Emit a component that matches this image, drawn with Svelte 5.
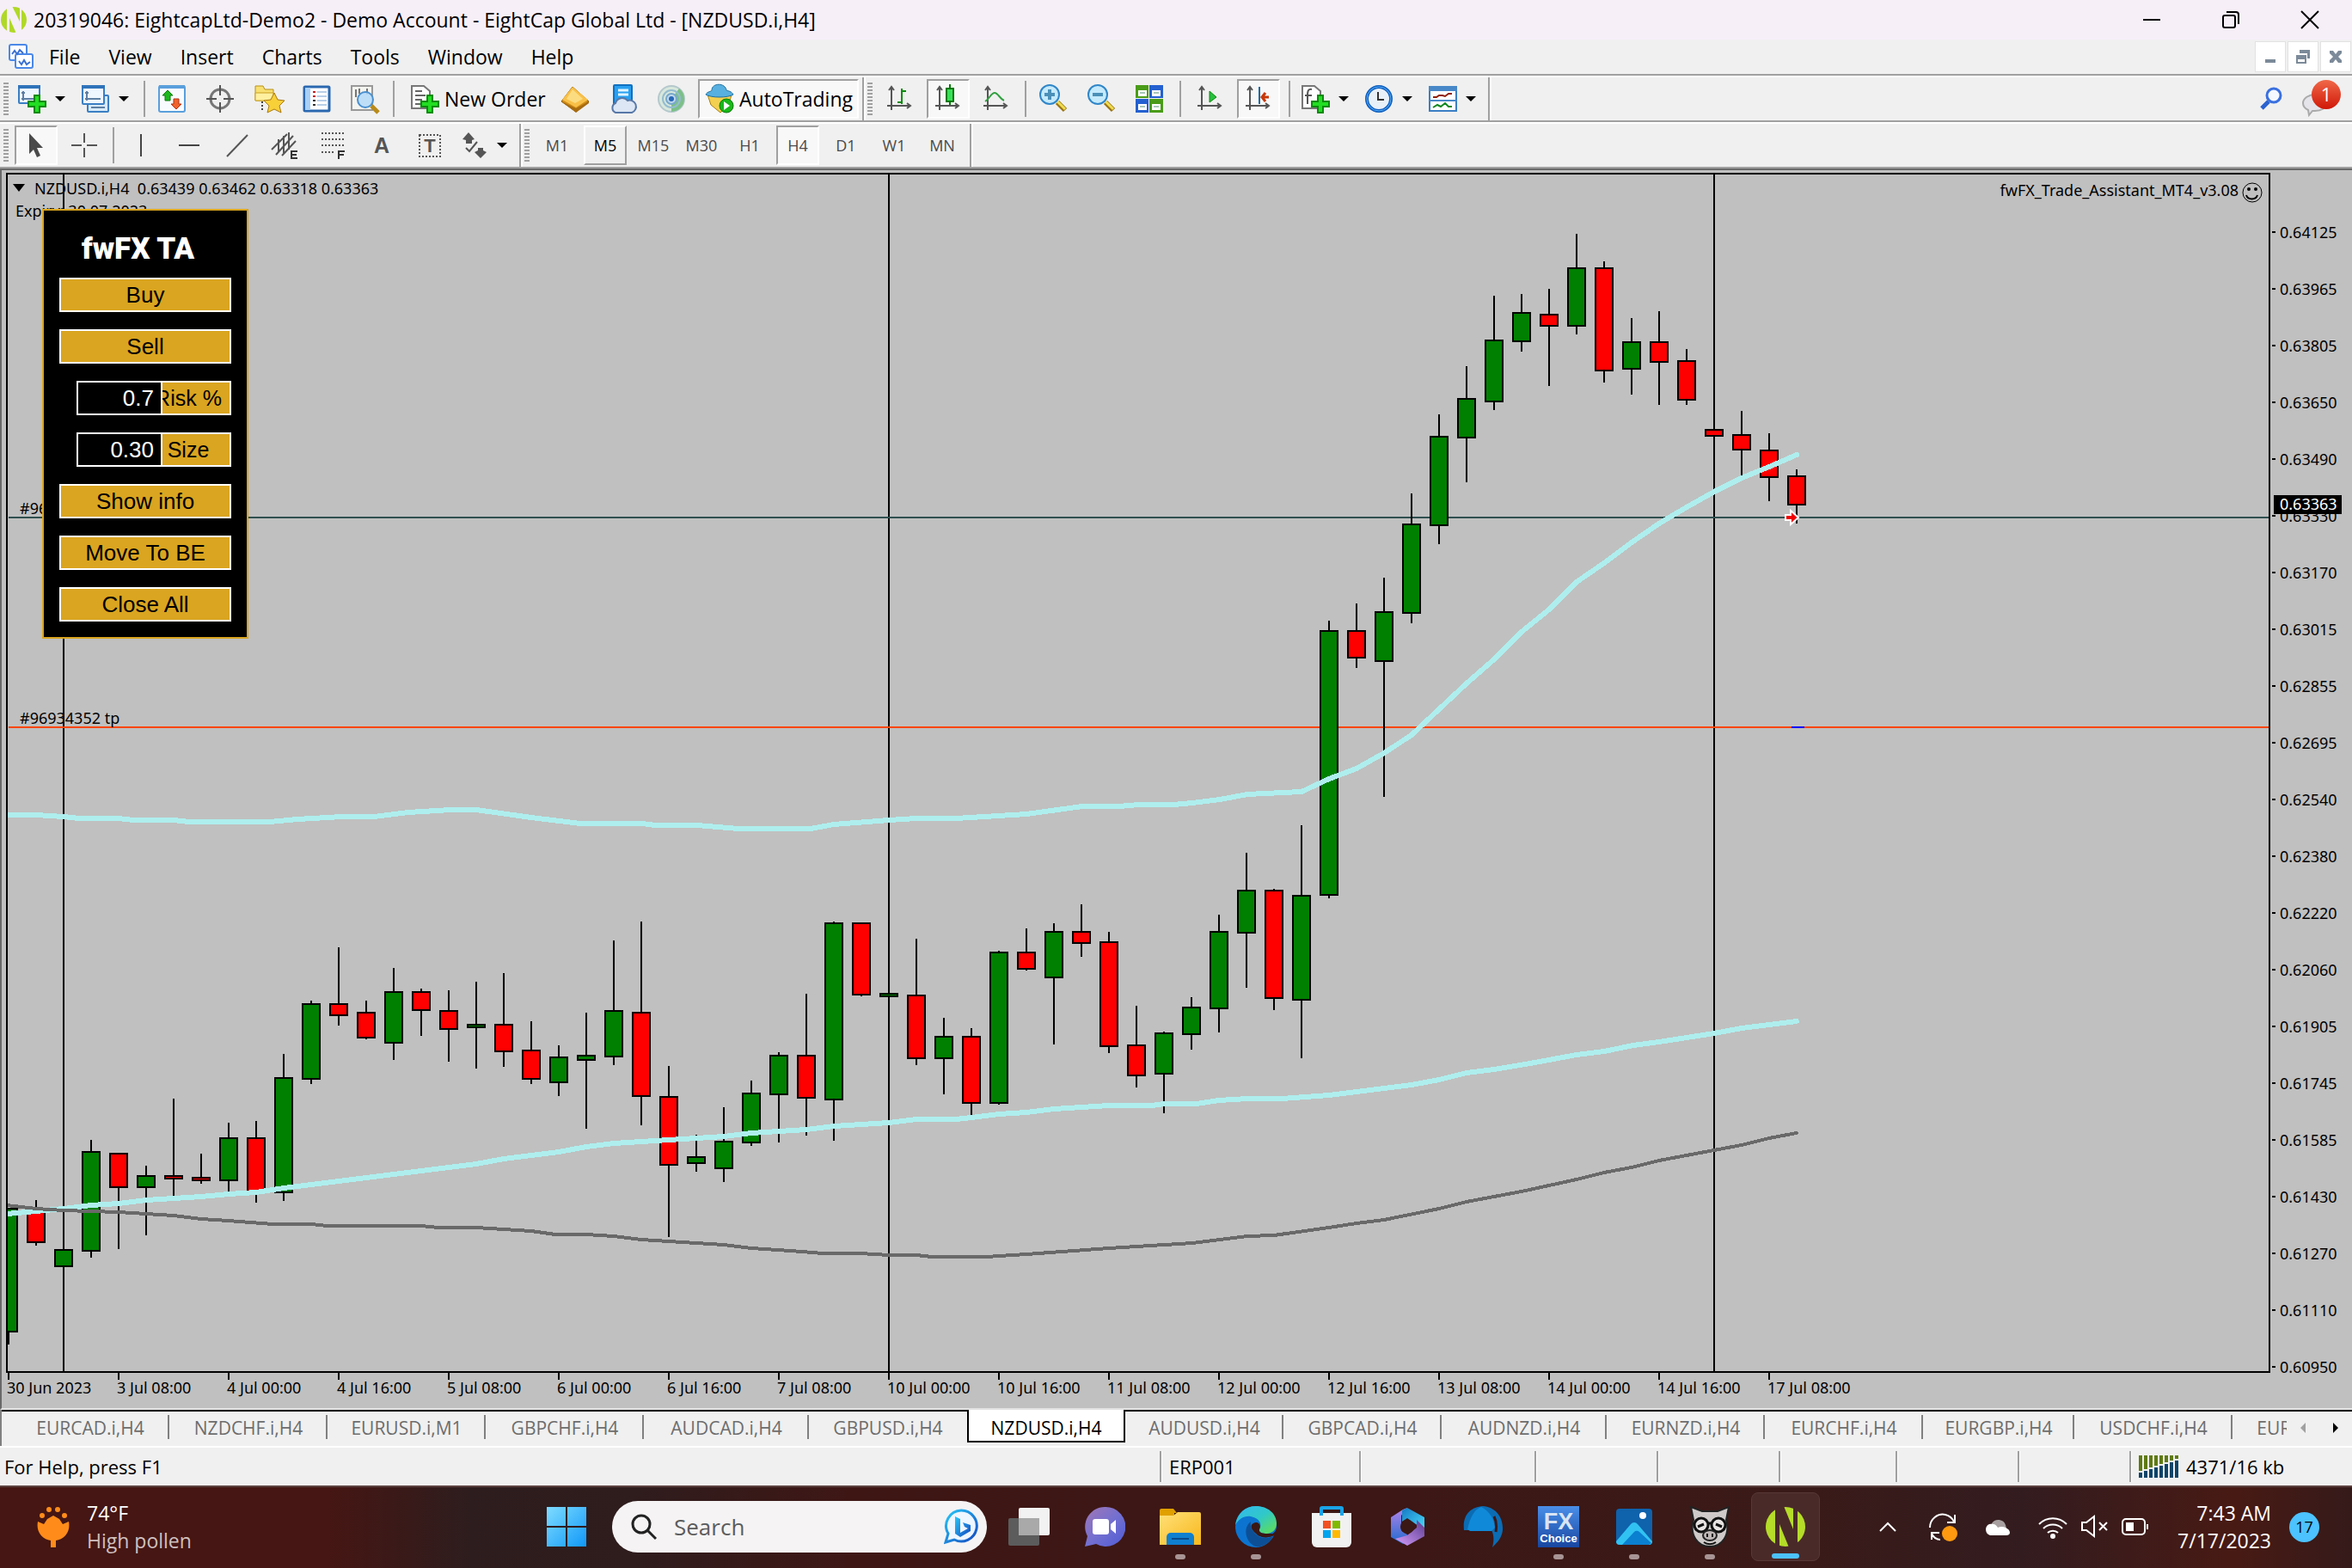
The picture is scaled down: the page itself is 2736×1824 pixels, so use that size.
<script>
  const menus = ['File', 'View', 'Insert', 'Charts', 'Tools', 'Window', 'Help'];
  const frames = ['M1', 'M5', 'M15', 'M30', 'H1', 'H4', 'D1', 'W1', 'MN'];
  const drawing = ['vline', 'hline', 'trend', 'channel', 'fib', 'letter', 'label'];
  const tabs = [
    'EURCAD.i,H4', 'NZDCHF.i,H4', 'EURUSD.i,M1', 'GBPCHF.i,H4', 'AUDCAD.i,H4', 'GBPUSD.i,H4', 'NZDUSD.i,H4',
    'AUDUSD.i,H4', 'GBPCAD.i,H4', 'AUDNZD.i,H4', 'EURNZD.i,H4', 'EURCHF.i,H4', 'EURGBP.i,H4', 'USDCHF.i,H4', 'EURAUD.i,H4'
  ];
  const wideTabs = ['AUDCAD.i,H4', 'AUDNZD.i,H4'];
  const narrowTabs = ['EURGBP.i,H4'];

  const prices = [
    '0.64125', '0.63965', '0.63805', '0.63650', '0.63490', '0.63330', '0.63170', '0.63015', '0.62855', '0.62695',
    '0.62540', '0.62380', '0.62220', '0.62060', '0.61905', '0.61745', '0.61585', '0.61430', '0.61270', '0.61110', '0.60950'
  ];
  const times = [
    '30 Jun 2023', '3 Jul 08:00', '4 Jul 00:00', '4 Jul 16:00', '5 Jul 08:00', '6 Jul 00:00', '6 Jul 16:00', '7 Jul 08:00',
    '10 Jul 00:00', '10 Jul 16:00', '11 Jul 08:00', '12 Jul 00:00', '12 Jul 16:00', '13 Jul 08:00', '14 Jul 00:00',
    '14 Jul 16:00', '17 Jul 08:00'
  ];
  const STEP = 32;

  // direction, high, body top, body bottom, low
  const candles = [
    ['up', 1405, 1405, 1550, 1564], ['down', 1396, 1409, 1446, 1449], ['up', 1453, 1453, 1474, 1474],
    ['up', 1326, 1339, 1456, 1463], ['down', 1341, 1341, 1382, 1453], ['up', 1356, 1367, 1382, 1437],
    ['down', 1278, 1367, 1372, 1394], ['down', 1342, 1369, 1374, 1377], ['up', 1306, 1323, 1374, 1387],
    ['down', 1304, 1323, 1387, 1399], ['up', 1226, 1253, 1388, 1397], ['up', 1164, 1167, 1256, 1261],
    ['down', 1102, 1167, 1182, 1193], ['down', 1164, 1177, 1208, 1209], ['up', 1126, 1153, 1214, 1233],
    ['down', 1150, 1153, 1176, 1205], ['down', 1152, 1175, 1198, 1235], ['up', 1142, 1191, 1196, 1243],
    ['down', 1132, 1191, 1224, 1241], ['down', 1188, 1221, 1256, 1261], ['up', 1216, 1229, 1260, 1275],
    ['up', 1178, 1227, 1234, 1313], ['up', 1094, 1175, 1230, 1239], ['down', 1072, 1177, 1276, 1309],
    ['down', 1240, 1275, 1356, 1439], ['up', 1320, 1345, 1354, 1363], ['up', 1288, 1327, 1360, 1375],
    ['up', 1257, 1271, 1330, 1333], ['up', 1224, 1227, 1274, 1329], ['down', 1156, 1227, 1278, 1321],
    ['up', 1072, 1073, 1280, 1327], ['down', 1073, 1073, 1158, 1159], ['up', 1155, 1155, 1160, 1160],
    ['down', 1092, 1157, 1232, 1239], ['up', 1184, 1205, 1232, 1273], ['down', 1196, 1205, 1284, 1297],
    ['up', 1106, 1107, 1284, 1285], ['down', 1080, 1107, 1128, 1129], ['up', 1074, 1083, 1138, 1215],
    ['down', 1052, 1083, 1098, 1113], ['down', 1084, 1095, 1218, 1225], ['down', 1170, 1215, 1252, 1265],
    ['up', 1200, 1201, 1250, 1295], ['up', 1160, 1171, 1204, 1221], ['up', 1064, 1083, 1174, 1201],
    ['up', 992, 1035, 1086, 1149], ['down', 1034, 1035, 1162, 1175], ['up', 960, 1041, 1164, 1231],
    ['up', 722, 733, 1042, 1045], ['down', 702, 733, 766, 777], ['up', 672, 711, 770, 927],
    ['up', 574, 609, 714, 725], ['up', 482, 507, 612, 633], ['up', 426, 463, 510, 561],
    ['up', 344, 395, 468, 477], ['up', 342, 363, 398, 409], ['down', 336, 365, 380, 449],
    ['up', 272, 311, 380, 389], ['down', 304, 311, 432, 445], ['up', 370, 397, 430, 459],
    ['down', 362, 397, 422, 471], ['down', 406, 419, 466, 471], ['down', 499, 499, 508, 508],
    ['down', 478, 505, 524, 555], ['down', 504, 523, 556, 583], ['down', 546, 553, 588, 609]
  ];

  const fastAverage =
    '8,948 42,948 74,950 92,952 137,952 156,954 202,954 220,956 314,956 346,953 398,950 435,950 475,945 524,942 554,942 ' +
    '618,951 675,958 747,958 762,960 811,960 859,964 943,964 970,959 1034,954 1066,952 1112,952 1194,947 1259,938 1302,938 ' +
    '1325,936 1365,936 1387,934 1419,930 1451,924 1514,921 1546,906 1578,894 1610,876 1642,855 1674,825 1706,795 1738,767 ' +
    '1770,735 1802,709 1834,677 1866,655 1898,631 1930,609 1962,590 1994,572 2026,556 2058,543 2090,529';
  const midAverage =
    '8,1412 42,1409 74,1406 106,1402 138,1400 170,1396 234,1392 266,1389 298,1387 330,1382 394,1374 458,1366 522,1358 ' +
    '554,1354 586,1348 650,1340 682,1334 714,1330 778,1326 842,1322 874,1318 906,1316 938,1314 970,1310 1034,1306 ' +
    '1066,1302 1112,1302 1130,1300 1162,1296 1194,1294 1226,1290 1290,1286 1340,1286 1354,1284 1392,1284 1418,1280 ' +
    '1451,1278 1491,1278 1546,1274 1578,1270 1642,1262 1674,1256 1706,1248 1738,1244 1780,1237 1834,1227 1866,1223 ' +
    '1900,1216 1930,1212 1962,1207 1994,1202 2026,1196 2090,1188';
  const slowAverage =
    '8,1402 42,1406 74,1408 138,1410 202,1414 234,1418 266,1420 317,1424 362,1424 381,1426 490,1426 510,1428 554,1428 ' +
    '618,1432 646,1436 682,1436 714,1438 746,1442 842,1448 874,1452 920,1455 957,1458 1000,1458 1034,1460 1066,1460 ' +
    '1084,1462 1147,1462 1194,1459 1290,1452 1387,1446 1419,1442 1451,1438 1482,1437 1546,1428 1578,1423 1610,1419 ' +
    '1674,1406 1706,1398 1770,1386 1802,1379 1834,1372 1866,1364 1898,1358 1930,1350 1994,1338 2026,1332 2058,1324 2090,1318';

  const apps = [
    ['taskview', 'Task view', ''], ['chat', 'Chat', ''], ['explorer', 'File Explorer', 'open'], ['edge', 'Microsoft Edge', 'open'],
    ['store', 'Microsoft Store', ''], ['m365', 'Microsoft 365', ''], ['bird', 'Mail', ''], ['fx', 'FX Choice', 'open'],
    ['photos', 'Photos', 'open'], ['pig', 'Pig', 'open'], ['eight', 'MetaTrader 4', 'current']
  ];

  let risk = $state('0.7');
  let size = $state('0.30');
</script>

{#snippet plus()}
  <path d="M19 13h6v7h7v6h-7v7h-6v-7h-7v-6h7z" fill="#22dd22" stroke="#0a8a0a" stroke-width="2" />
{/snippet}

{#snippet axes()}
  <path d="M6 30V4M1 25h26M3 7l3-4 3 4M24 22l4 3-4 3" fill="none" stroke="#555" stroke-width="2" />
{/snippet}

{#snippet lens()}
  <path d="M21 21l9 9" stroke="#9a7410" stroke-width="6" />
  <path d="M21 20l9 9" stroke="#f0dc50" stroke-width="3" />
  <circle cx="12" cy="12" r="11" fill="#c4eafc" stroke="#2f86c8" stroke-width="2" />
{/snippet}

{#snippet icon(name)}
  <svg class="ico" viewBox="0 0 32 34" aria-hidden="true">
    {#if name === 'newchart'}
      <rect x="1" y="2" width="24" height="20" rx="1" fill="#eef6ff" stroke="#3a7fc4" stroke-width="2" />
      <rect x="0" y="1" width="26" height="4" fill="#2f74ba" />
      <path d="M6 8v11M4 17h17M4 10h4" stroke="#5d7fa3" stroke-width="2" fill="none" />
      {@render plus()}
    {:else if name === 'profiles'}
      <rect x="7" y="13" width="24" height="19" rx="1" fill="#d8eafa" stroke="#3a7fc4" stroke-width="2" />
      <rect x="1" y="2" width="25" height="21" rx="1" fill="#eef6ff" stroke="#3a7fc4" stroke-width="2" />
      <rect x="0" y="1" width="27" height="4" fill="#2f74ba" />
      <path d="M6 8v11M4 17h18M4 10h4M11 27h16" stroke="#5d7fa3" stroke-width="2" fill="none" />
    {:else if name === 'market'}
      <rect x="1" y="2" width="30" height="30" rx="2" fill="#f8fbff" stroke="#5a9fdc" stroke-width="2" />
      <rect x="1" y="1" width="30" height="4" fill="#5a9fdc" />
      <path d="M11 7l6 6h-3v6H8v-6H5z" fill="#1db81d" stroke="#0a7a0a" />
      <path d="M21 29l6-6h-3v-6h-6v6h-3z" fill="#f0642c" stroke="#b03010" />
    {:else if name === 'target'}
      <circle cx="16" cy="17" r="11" fill="none" stroke="#777" stroke-width="3" />
      <path d="M16 1v12M16 21v12M0 17h12M20 17h12" stroke="#555" stroke-width="2" />
    {:else if name === 'navigator'}
      <path d="M1 2h9l2 4h10v13H1z" fill="#f8e070" stroke="#b89018" />
      <path d="M1 10h21v9H1z" fill="#fff0a0" stroke="#c8a020" />
      <path d="M9 20v12" stroke="#444" stroke-width="2" stroke-dasharray="2 2" />
      <path d="M23 10l4 8 8 1-6 6 2 8-8-4-8 4 2-8-6-6 8-1z" fill="#f8d038" stroke="#a87810" />
    {:else if name === 'terminal'}
      <rect x="2" y="3" width="29" height="28" rx="1" fill="#fff" stroke="#2a68b0" stroke-width="3" />
      <rect x="3" y="4" width="6" height="26" fill="#a8d0f8" />
      <path d="M12 9h3M12 14h3" stroke="#c02020" stroke-width="2" />
      <path d="M12 19h3M12 24h3" stroke="#303030" stroke-width="2" />
      <path d="M17 9h11M17 14h11M17 19h11M17 24h11" stroke="#b8cfe8" stroke-width="2" />
    {:else if name === 'tester'}
      <path d="M1 2h24v28H1z" fill="#f4f4f0" stroke="#999" stroke-width="2" />
      <path d="M6 6v9M10 5v6M19 5v7" stroke="#777" stroke-width="2" />
      <path d="M24 25l8 8" stroke="#b88a18" stroke-width="5" />
      <circle cx="17" cy="18" r="9" fill="#b8dcf8" fill-opacity="0.9" stroke="#4a90d0" stroke-width="2" />
    {:else if name === 'order'}
      <path d="M1 2h14l7 6v20H1z" fill="#fff" stroke="#777" stroke-width="2" />
      <path d="M5 8h8M5 13h12M5 18h8M5 23h6" stroke="#666" stroke-width="2" />
      {@render plus()}
    {:else if name === 'gold'}
      <path d="M13 3l19 17-15 12L0 20z" fill="#d08c18" stroke="#8a5808" />
      <path d="M13 3l18 15-14 9L1 18z" fill="#f8c048" />
      <path d="M13 6l12 11-9 5L6 17z" fill="#fcdc80" />
      <path d="M0 20l17 8 15-8v2L17 33z" fill="#a86c10" />
    {:else if name === 'cloud'}
      <rect x="5" y="1" width="21" height="23" rx="1" fill="#28a0f0" stroke="#1070c0" stroke-width="2" />
      <path d="M10 7h12M10 12h12" stroke="#e0f4ff" stroke-width="3" />
      <path d="M7 33a6 6 0 0 1 0-11 8 8 0 0 1 14-3 7 7 0 0 1 5 14z" fill="#dce6f4" stroke="#5878a8" stroke-width="2" />
    {:else if name === 'signal'}
      <circle cx="16" cy="17" r="15" fill="#d8e8dc" stroke="#b4c8cc" stroke-width="2" />
      <path d="M16 17v15a15 15 0 0 0 15-15 15 15 0 0 0-6-12z" fill="#7cc088" />
      <circle cx="16" cy="17" r="10" fill="none" stroke="#94bcd0" stroke-width="2" />
      <circle cx="16" cy="17" r="6" fill="#c0d8ec" stroke="#78a8cc" stroke-width="2" />
      <circle cx="16" cy="17" r="3" fill="#2868b8" />
    {:else if name === 'auto'}
      <path d="M2 12h28l-3 11-10 10-11-9z" fill="#f4d050" stroke="#a88010" />
      <path d="M0 12c2-4 6-3 7-5 0-9 16-9 17 0 2 1 6 1 8 5-6 4-26 4-32 0z" fill="#58b0e0" stroke="#2070a0" />
      <circle cx="24" cy="25" r="8" fill="#18b818" stroke="#0a780a" />
      <path d="M21 20v10l7-5z" fill="#fff" />
    {:else if name === 'bars'}
      {@render axes()}
      <path d="M18 5v18M18 8h5M13 21h5" stroke="#0a8a0a" stroke-width="2" fill="none" />
    {:else if name === 'candles'}
      {@render axes()}
      <path d="M18 0v24" stroke="#087808" stroke-width="2" />
      <rect x="14" y="5" width="8" height="15" fill="#38e058" stroke="#087808" stroke-width="2" />
    {:else if name === 'line'}
      {@render axes()}
      <path d="M3 20c5-3 7-10 11-10s6 7 11 9" stroke="#30a040" stroke-width="2" fill="none" />
    {:else if name === 'zoomin'}
      {@render lens()}
      <path d="M12 6v12M6 12h12" stroke="#4a90b8" stroke-width="4" />
    {:else if name === 'zoomout'}
      {@render lens()}
      <path d="M6 12h12" stroke="#4a90b8" stroke-width="4" />
    {:else if name === 'tile'}
      <path d="M0 1h15v15H0zM16 17h16v16H16z" fill="#4a9c18" />
      <path d="M16 1h16v15H16zM0 17h15v16H0z" fill="#2460d0" />
      <path d="M3 7h10v7H3zM19 7h10v7H19zM3 23h10v7H3zM19 23h10v7H19z" fill="#fff" />
      <path d="M5 10h6M21 10h6M5 26h6M21 26h6" stroke="#a8c8b8" stroke-width="2" />
    {:else if name === 'scroll'}
      {@render axes()}
      <path d="M15 8v13l8-6z" fill="#28c040" stroke="#0a8a0a" />
    {:else if name === 'shift'}
      {@render axes()}
      <path d="M17 3v20" stroke="#1868a0" stroke-width="2" />
      <path d="M28 15h-8M24 10l-4 5 4 5" stroke="#c83808" stroke-width="3" fill="none" />
    {:else if name === 'indicators'}
      <path d="M1 2h14l7 6v20H1z" fill="#fff" stroke="#777" stroke-width="2" />
      <path d="M12 6c-5-1-5 3-5 8v9M4 13h8" stroke="#555" stroke-width="2" fill="none" />
      {@render plus()}
    {:else if name === 'clock'}
      <circle cx="16" cy="17" r="14" fill="#e8f0f8" stroke="#1060c0" stroke-width="4" />
      <circle cx="16" cy="17" r="14" fill="none" stroke="#58b0f8" />
      <path d="M15 9v9h7" stroke="#333" stroke-width="2" fill="none" />
    {:else if name === 'template'}
      <rect x="1" y="3" width="31" height="28" fill="#fff" stroke="#3a7fc4" stroke-width="2" />
      <path d="M0 2h33v6H0zM1 18h31v2H1z" fill="#4888c8" />
      <path d="M5 15h4l3-2h4l3 1 4-3h4" stroke="#902008" stroke-width="2" fill="none" />
      <path d="M5 27l5-3 4 2 5-4 4 4h4" stroke="#108820" stroke-width="2" fill="none" />
    {:else if name === 'cursor'}
      <path d="M8 3v24l5-5 4 9 4-2-4-9h7z" fill="#4a4a4a" />
    {:else if name === 'cross'}
      <path d="M16 3v11M16 20v11M1 17h12M19 17h12" stroke="#555" stroke-width="2" />
    {:else if name === 'vline'}
      <path d="M16 4v26" stroke="#444" stroke-width="2" />
    {:else if name === 'hline'}
      <path d="M4 17h24" stroke="#444" stroke-width="2" />
    {:else if name === 'trend'}
      <path d="M4 30L28 5" stroke="#555" stroke-width="2" />
    {:else if name === 'channel'}
      <path d="M0 22L18 4M5 28L25 6M12 29L28 12M8 10v14M14 6v20M20 2v20" stroke="#555" stroke-width="2" />
      <path d="M30 24h-7v8h7M23 28h6" stroke="#333" stroke-width="2" fill="none" />
    {:else if name === 'fib'}
      <path d="M2 3h26M2 10h26M2 17h26M2 25h16" stroke="#555" stroke-width="2" stroke-dasharray="2 2" />
      <path d="M22 33v-9h7M22 28h6" stroke="#333" stroke-width="2" fill="none" />
    {:else if name === 'letter'}
      <text x="16" y="26" text-anchor="middle" class="glyph">A</text>
    {:else if name === 'label'}
      <rect x="4" y="5" width="24" height="25" fill="none" stroke="#555" stroke-width="2" stroke-dasharray="2 2" />
      <text x="16" y="25" text-anchor="middle" class="glyph small">T</text>
    {:else if name === 'shapes'}
      <path d="M10 2l7 8-3 1v4H7v-4l-4-1zM24 32l-7-7 4-2v-3h6v3l4 2z" fill="#555" />
      <path d="M7 20l4 4 9-11" stroke="#555" stroke-width="2" fill="none" />
    {/if}
  </svg>
{/snippet}

{#snippet tool(name, label, pressed = false)}
  <button class="tool" class:pressed aria-label={label}>{@render icon(name)}</button>
{/snippet}

{#snippet drop(name, label)}
  <button class="drop" aria-label={label}>{@render icon(name)}<span class="caret"></span></button>
{/snippet}

{#snippet eight()}
  <circle cx="24" cy="24" r="23" fill="#b5dc28" />
  <path d="M12 0h10l11 27V2h5v46H28L17 21v25h-5z" fill="#4a2a29" />
{/snippet}

{#snippet app(name)}
  <svg class="app-ico" viewBox="0 0 48 48" aria-hidden="true">
    {#if name === 'taskview'}
      <rect x="12" y="2" width="36" height="32" rx="2" fill="#f2f2f2" />
      <rect x="0" y="14" width="36" height="32" rx="2" fill="#5c5c5c" />
      <path d="M12 14h24v20H12z" fill="#a9a9a9" />
    {:else if name === 'chat'}
      <path d="M24 1a23 23 0 1 1-10 43L1 47l3-12A23 23 0 0 1 24 1z" fill="url(#g-chat)" />
      <rect x="10" y="15" width="19" height="18" rx="3" fill="#fff" />
      <path d="M31 21l6-5v16l-6-5z" fill="#fff" />
    {:else if name === 'explorer'}
      <path d="M0 5a2 2 0 0 1 2-2h14l4 5h-3v5H0z" fill="#e0a000" />
      <path d="M0 11h16l5-4h25a2 2 0 0 1 2 2v36H0z" fill="url(#g-folder)" />
      <path d="M8 45V36a5 5 0 0 1 5-5h22a5 5 0 0 1 5 5v9z" fill="#0f7fd0" />
      <path d="M14 38h20" stroke="#0a4a8c" stroke-width="2" />
    {:else if name === 'edge'}
      <path d="M0 24a24 24 0 0 1 48 0c0 7-8 12-15 10l-8-1c6 4 14 4 20 1-4 8-12 14-21 14A24 24 0 0 1 0 24z" fill="#0c74d0" />
      <path d="M0 22C2 8 12 0 24 0c14 0 24 9 24 20 0 8-6 12-13 12-5 0-8-2-7-5 4-7-1-13-10-15C10 11 4 15 0 22z" fill="url(#g-edge)" />
      <path d="M18 18c-10 7-6 25 6 29 8 1 16-4 20-12-8 4-16 2-21-3-4-4-6-8-5-14z" fill="#0d4f96" />
      <path d="M28 27c-1 3 2 5 7 5h8l2 2c-8 4-16 3-21-2-6-5-7-10-3-12 4-3 10 1 7 7z" fill="#3a1815" />
    {:else if name === 'store'}
      <path d="M1 8h46v34a6 6 0 0 1-6 6H7a6 6 0 0 1-6-6z" fill="#f1f1f1" />
      <path d="M10 11V3a3 3 0 0 1 3-3h22a3 3 0 0 1 3 3v8h-4V4H14v7z" fill="#19a3e8" />
      <path d="M14 17h9v9h-9z" fill="#f25022" /><path d="M25 17h9v9h-9z" fill="#7fba00" />
      <path d="M14 28h9v9h-9z" fill="#00a4ef" /><path d="M25 28h9v9h-9z" fill="#ffb900" />
    {:else if name === 'm365'}
      <path d="M24 2l-5 2L5 13v23l14 8 6-4v-6l-8-6V11z" fill="url(#g-m1)" />
      <path d="M18 5l6-3 20 11v14l-10-6-10-7-6 4z" fill="url(#g-m2)" />
      <path d="M44 25v10L24 46 10 38l14-4 11-9v-9z" fill="url(#g-m3)" />
      <circle cx="24" cy="24" r="8" fill="#3a1815" />
    {:else if name === 'bird'}
      <path d="M2 28C0 10 10 1 24 0c14 1 24 12 23 28-1 9-6 14-12 20 2-8 2-14-1-20H4z" fill="#0b6cb4" />
      <path d="M6 27C9 13 14 4 22 1c10 5 15 14 16 24l-4 4H9z" fill="#1089d8" />
      <path d="M37 12c3 6 3 12 2 18" fill="none" stroke="#3a1815" stroke-width="3" />
    {:else if name === 'fx'}
      <rect width="48" height="48" fill="url(#g-fx)" />
      <text x="24" y="27" text-anchor="middle" class="fx-big">FX</text>
      <text x="24" y="42" text-anchor="middle" class="fx-small">Choice</text>
    {:else if name === 'photos'}
      <rect x="3" y="3" width="42" height="42" rx="4" fill="#0f62ac" />
      <path d="M3 41l17-20a5 5 0 0 1 8 0l17 20a4 4 0 0 1-4 4H7a4 4 0 0 1-4-4z" fill="#31c2f2" />
      <path d="M10 45l14-15a4 4 0 0 1 6 0l14 13-3 2z" fill="#0b7fd0" />
      <circle cx="34" cy="11" r="4" fill="#fff" />
    {:else if name === 'pig'}
      <path d="M2 1l13 5h18L46 1l-3 15c5 18-5 31-19 31S0 34 5 16z" fill="#cfcaca" stroke="#222" stroke-width="2" />
      <circle cx="14" cy="22" r="8" fill="#e8e4e4" stroke="#111" stroke-width="3" />
      <circle cx="34" cy="22" r="8" fill="#e8e4e4" stroke="#111" stroke-width="3" />
      <path d="M21 20h6M10 24l7-3M38 24l-7-3" stroke="#111" stroke-width="3" />
      <ellipse cx="24" cy="34" rx="8" ry="6" fill="#bdb6b6" stroke="#222" stroke-width="2" />
      <path d="M21 32v4M27 32v4M17 42c4 3 10 3 14 0" stroke="#111" stroke-width="2" fill="none" />
    {:else if name === 'eight'}
      {@render eight()}
    {/if}
  </svg>
{/snippet}

<svg class="defs" width="0" height="0" aria-hidden="true">
  <defs>
    <linearGradient id="g-chat" x1="0" y1="0" x2="1" y2="1"><stop offset="0" stop-color="#a276b4" /><stop offset="0.5" stop-color="#7470d0" /><stop offset="1" stop-color="#4f5bd5" /></linearGradient>
    <linearGradient id="g-folder" x1="0" y1="0" x2="1" y2="1"><stop offset="0" stop-color="#ffe07a" /><stop offset="1" stop-color="#f8b81a" /></linearGradient>
    <linearGradient id="g-edge" x1="0" y1="0" x2="1" y2="1"><stop offset="0" stop-color="#34b8f0" /><stop offset="0.5" stop-color="#30c8c8" /><stop offset="1" stop-color="#66e04a" /></linearGradient>
    <linearGradient id="g-m1" x1="0" y1="0" x2="0" y2="1"><stop offset="0" stop-color="#b484e8" /><stop offset="1" stop-color="#1e6ad0" /></linearGradient>
    <linearGradient id="g-m2" x1="0" y1="0" x2="1" y2="1"><stop offset="0" stop-color="#1578c4" /><stop offset="1" stop-color="#48dcfc" /></linearGradient>
    <linearGradient id="g-m3" x1="1" y1="0" x2="0" y2="1"><stop offset="0" stop-color="#5a3a90" /><stop offset="1" stop-color="#d8a0fc" /></linearGradient>
    <linearGradient id="g-fx" x1="0" y1="0" x2="0" y2="1"><stop offset="0" stop-color="#4a8ee8" /><stop offset="1" stop-color="#1846a0" /></linearGradient>
    <linearGradient id="g-bing" x1="0" y1="0" x2="1" y2="1"><stop offset="0" stop-color="#28c8f8" /><stop offset="1" stop-color="#1448c0" /></linearGradient>
    <linearGradient id="g-win" x1="0" y1="0" x2="1" y2="1"><stop offset="0" stop-color="#7fdcff" /><stop offset="1" stop-color="#1098f8" /></linearGradient>
    <linearGradient id="g-badge" x1="0" y1="0" x2="0" y2="1"><stop offset="0" stop-color="#f06848" /><stop offset="1" stop-color="#d01808" /></linearGradient>
  </defs>
</svg>

<div class="desktop">
  <header class="title-bar">
    <svg class="logo" viewBox="0 0 32 32" aria-hidden="true">
      <circle cx="16" cy="16" r="15" fill="#b0d828" />
      <path d="M8 0h6l9 18V1h2v31h-6L11 14v18H8z" fill="#f6eff8" />
    </svg>
    <h1>20319046: EightcapLtd-Demo2 - Demo Account - EightCap Global Ltd - [NZDUSD.i,H4]</h1>
    <div class="window-buttons">
      <button aria-label="Minimize"><svg viewBox="0 0 20 20"><path d="M0 10h20" /></svg></button>
      <button aria-label="Restore"><svg viewBox="0 0 20 20"><rect x="1" y="5" width="14" height="14" rx="2" /><path d="M5 1h11a3 3 0 0 1 3 3v11" /></svg></button>
      <button aria-label="Close"><svg viewBox="0 0 20 20"><path d="M0 0l20 20M20 0L0 20" /></svg></button>
    </div>
  </header>

  <nav class="menu-bar">
    <svg class="doc" viewBox="0 0 30 30" aria-hidden="true">
      <rect x="1" y="1" width="20" height="18" rx="2" fill="#fff" stroke="#4a88e8" stroke-width="2" />
      <rect x="8" y="12" width="20" height="16" rx="2" fill="#fff" stroke="#4a88e8" stroke-width="2" />
      <path d="M4 12l3-4 3 4 3-5 4 4M12 20l3 4 3-5 3 5 4-3" fill="none" stroke="#3a70d0" stroke-width="2" />
    </svg>
    {#each menus as item}<button class="menu">{item}</button>{/each}
    <div class="mdi-buttons">
      <button aria-label="Minimize chart"><svg viewBox="0 0 16 16"><path d="M2 11h12v4H2z" /></svg></button>
      <button aria-label="Restore chart"><svg viewBox="0 0 16 16"><path d="M4 0h12v10h-3V4H4zM0 6h12v10H0zm2 5v3h8v-3z" fill-rule="evenodd" /></svg></button>
      <button aria-label="Close chart"><svg viewBox="0 0 16 16"><path d="M1 1h4l3 4 3-4h4v3l-4 4 4 4v3h-4l-3-4-3 4H1v-3l4-4-4-4z" /></svg></button>
    </div>
  </nav>

  <div class="toolbar first">
    <span class="grip"></span>
    {@render drop('newchart', 'New chart')}
    {@render drop('profiles', 'Profiles')}
    <span class="sep"></span>
    {@render tool('market', 'Market Watch')}
    {@render tool('target', 'Data Window')}
    {@render tool('navigator', 'Navigator')}
    {@render tool('terminal', 'Terminal')}
    {@render tool('tester', 'Strategy Tester')}
    <span class="sep"></span>
    <button class="labelled order">{@render icon('order')}New Order</button>
    {@render tool('gold', 'MetaEditor')}
    {@render tool('cloud', 'Virtual Hosting')}
    {@render tool('signal', 'Signals')}
    <button class="labelled auto pressed">{@render icon('auto')}AutoTrading</button>
    <span class="edge"></span>
    <span class="grip"></span>
    {@render tool('bars', 'Bar chart')}
    {@render tool('candles', 'Candlesticks', true)}
    {@render tool('line', 'Line chart')}
    <span class="sep"></span>
    {@render tool('zoomin', 'Zoom in')}
    {@render tool('zoomout', 'Zoom out')}
    {@render tool('tile', 'Tile windows')}
    <span class="sep roomy"></span>
    {@render tool('scroll', 'Auto scroll')}
    {@render tool('shift', 'Chart shift', true)}
    <span class="sep roomy"></span>
    {@render drop('indicators', 'Indicators')}
    {@render drop('clock', 'Periods')}
    {@render drop('template', 'Templates')}
    <span class="edge"></span>
    <div class="right-tools">
      <button class="find" aria-label="Search">
        <svg viewBox="0 0 28 28"><path d="M3 25l8-8" stroke="#2a62d0" stroke-width="5" /><circle cx="17" cy="10" r="8" fill="#f4f8ff" stroke="#3a70e0" stroke-width="3" /></svg>
      </button>
      <button class="mail" aria-label="Notifications">
        <svg viewBox="0 0 50 44">
          <path d="M3 27c0-6 7-10 14-10s13 4 13 10-6 9-13 9h-3l-4 5-1-6c-4-2-6-4-6-8z" fill="#e4e4ea" stroke="#aaa" stroke-width="2" />
          <circle cx="30" cy="17" r="17" fill="url(#g-badge)" />
          <text x="30" y="25" text-anchor="middle" class="badge-text">1</text>
        </svg>
      </button>
    </div>
  </div>

  <div class="toolbar second">
    <span class="grip"></span>
    {@render tool('cursor', 'Cursor', true)}
    {@render tool('cross', 'Crosshair')}
    <span class="sep"></span>
    {#each drawing as name}{@render tool(name, name)}{/each}
    {@render drop('shapes', 'Arrows')}
    <span class="edge"></span>
    <span class="grip"></span>
    {#each frames as frame}
      <button class="tool frame" class:pressed={frame === 'H4'} class:raised={frame === 'M5'}>{frame}</button>
    {/each}
    <span class="edge"></span>
  </div>

  <main class="chart">
    <svg class="plot" viewBox="4 198 2728 1440" role="img" aria-label="NZDUSD.i H4 candlestick chart">
      <clipPath id="area"><rect x="9" y="203" width="2630" height="1392" /></clipPath>
      <g class="crisp">
        <path d="M74 202V1595M1034 202V1595M1994 202V1595" class="divider" />
        <g clip-path="url(#area)">
          <path d="M10 602H2640" stroke="#2f4f4f" stroke-width="2" />
          <path d="M10 846H2640" stroke="#ff4500" stroke-width="2" />
          <path d="M2084 846h15" stroke="#0000ff" stroke-width="2" />
          {#each candles as [dir, high, top, bottom, low], i}
            <rect x={9 + i * STEP} y={high} width="2" height={low - high} />
            <rect x={-1 + i * STEP} y={top} width="22" height={bottom - top} />
            <rect x={1 + i * STEP} y={top + 2} width="18" height={bottom - top - 4} class={dir} />
          {/each}
          <polyline points={fastAverage} class="average fast" />
          <polyline points={midAverage} class="average fast" />
          <polyline points={slowAverage} class="average slow" />
        </g>
        <path d="M8 1596V202H2640V1596z" class="frame-line" />
        {#each prices as _, i}<path d="M2643 {270 + i * 66}h4" class="divider" />{/each}
        {#each times as _, i}<path d="M{10 + i * STEP * 4} 1596v9" class="divider" />{/each}
      </g>
      <path d="M2077 599h6v-5l9 8-9 8v-5h-6z" fill="#f00000" stroke="#fff" stroke-width="2" />
      <path d="M15 214h14l-7 9z" />
      <text x="40" y="226" xml:space="preserve">NZDUSD.i,H4  0.63439 0.63462 0.63318 0.63363</text>
      <text x="18" y="252">Expiry: 30.07.2023</text>
      <text x="23" y="598">#96934352</text>
      <text x="23" y="842">#96934352 tp</text>
      <text x="2604" y="228" text-anchor="end">fwFX_Trade_Assistant_MT4_v3.08</text>
      <g fill="none" stroke="#000" stroke-width="1">
        <circle cx="2620" cy="224" r="11" />
        <path d="M2613 227c2 6 11 6 13 0" stroke-width="2" />
      </g>
      <circle cx="2616" cy="220" r="2" /><circle cx="2624" cy="220" r="2" />
      {#each prices as price, i}<text x="2652" y={277 + i * 66}>{price}</text>{/each}
      <rect x="2645" y="576" width="79" height="22" />
      <text x="2652" y="593" class="current-price">0.63363</text>
      {#each times as time, i}<text x={8 + i * STEP * 4} y="1621">{time}</text>{/each}
    </svg>

    <section class="panel" aria-label="Trade assistant">
      <h2>fwFX TA</h2>
      <button>Buy</button>
      <button>Sell</button>
      <div class="field"><input id="risk" bind:value={risk} /><label for="risk">Risk %</label></div>
      <div class="field"><input id="size" bind:value={size} /><label for="size">Size</label></div>
      <button>Show info</button>
      <button>Move To BE</button>
      <button>Close All</button>
    </section>
  </main>

  <div class="tabs">
    <div class="tab-list">
      {#each tabs as tab}
        <button
          class="tab"
          class:active={tab === 'NZDUSD.i,H4'}
          class:bare={tab === 'GBPUSD.i,H4'}
          class:wide={wideTabs.includes(tab)}
          class:narrow={narrowTabs.includes(tab)}>{tab}</button>
      {/each}
    </div>
    <button class="scroll" aria-label="Scroll tabs left"><span class="prev"></span></button>
    <button class="scroll" aria-label="Scroll tabs right"><span class="next"></span></button>
  </div>

  <footer class="status">
    <span class="help">For Help, press F1</span>
    <span class="cell c232">ERP001</span>
    <span class="cell c204"></span>
    <span class="cell c142"></span>
    <span class="cell c142"></span>
    <span class="cell c136"></span>
    <span class="cell c142"></span>
    <span class="cell c130"></span>
    <span class="cell traffic">
      <svg viewBox="0 0 48 26" aria-hidden="true">
        {#each [0, 1, 2, 3, 4, 5, 6, 7] as n}
          <rect x={n * 6} y="0" width="4" height={18 - n * 2} fill="#5f7a12" />
          <rect x={n * 6} y={20 - n * 2} width="4" height={6 + n * 2} fill="#0c4468" />
        {/each}
      </svg>
      4371/16 kb
    </span>
  </footer>

  <div class="taskbar">
    <button class="weather">
      <svg viewBox="0 0 40 48" aria-hidden="true">
        <path d="M2 18l7 3 4-6 7-4 7 4 4 6 7-3c2 10-3 20-15 22v8h-6v-8C5 38 0 28 2 18z" fill="#ff8c1a" />
        <circle cx="7" cy="11" r="3" fill="#ff8c1a" /><circle cx="33" cy="11" r="3" fill="#ff8c1a" />
        <circle cx="15" cy="4" r="3" fill="#ff8c1a" /><circle cx="25" cy="4" r="3" fill="#ff8c1a" />
      </svg>
      <span class="lines"><span>74°F</span><span class="dim">High pollen</span></span>
    </button>
    <div class="centre">
      <button class="app" aria-label="Start">
        <svg class="app-ico" viewBox="0 0 48 48"><path d="M1 1h22v22H1zM25 1h22v22H25zM1 25h22v22H1zM25 25h22v22H25z" fill="url(#g-win)" /></svg>
      </button>
      <label class="search">
        <svg class="mag" viewBox="0 0 32 32" aria-hidden="true"><circle cx="13" cy="13" r="10" /><path d="M20 20l10 10" /></svg>
        <input placeholder="Search" aria-label="Search" />
        <svg class="bing" viewBox="0 0 40 42" aria-hidden="true">
          <path d="M20 2a18 18 0 1 1-8 34l-10 3 3-10A18 18 0 0 1 20 2z" fill="#eef6ff" stroke="url(#g-bing)" stroke-width="3" />
          <path d="M13 9l6 3v16l9-5-4-2-2-5 9 3v7l-12 7-6-4z" fill="url(#g-bing)" />
        </svg>
      </label>
      {#each apps as [name, label, state]}
        <button class="app {state}" aria-label={label}>{@render app(name)}</button>
      {/each}
    </div>
    <div class="tray">
      <svg class="t-chev" viewBox="0 0 34 34"><path d="M8 22l9-9 9 9" /></svg>
      <svg class="t-sync" viewBox="0 0 34 34">
        <path d="M2 18C2 8 11 1 20 3c4 1 8 4 10 8M31 3v9h-9M4 32v-8h9M4 25c2 4 6 7 10 7" />
        <circle cx="25" cy="25" r="9" class="dot" />
      </svg>
      <svg class="t-cloud" viewBox="0 0 34 34">
        <path d="M10 13a9 9 0 0 1 16 2l2 8H8z" fill="#a8a0a0" stroke="none" />
        <path d="M8 27a7 7 0 0 1-1-13c5-1 8 0 10 4 6-3 14 1 14 6 0 2-2 3-4 3z" fill="#fff" stroke="none" />
      </svg>
      <svg class="t-wifi" viewBox="0 0 34 34">
        <path d="M1 14c9-9 23-9 32 0M6 19c6-6 16-6 22 0M11 24c3-3 9-3 12 0" />
        <circle cx="17" cy="28" r="2" fill="#fff" />
      </svg>
      <svg class="t-mute" viewBox="0 0 34 34"><path d="M3 12h5l9-7v23l-9-7H3zM23 12l9 9M32 12l-9 9" /></svg>
      <svg class="t-batt" viewBox="0 0 34 34">
        <rect x="2" y="8" width="26" height="18" rx="4" /><path d="M31 14v6" />
        <rect x="6" y="12" width="9" height="10" fill="#fff" stroke="none" />
      </svg>
      <button class="clock"><span>7:43 AM</span><span>7/17/2023</span></button>
      <button class="count">17</button>
    </div>
  </div>
</div>

<style>
  :global(body) { margin: 0; background: #f0f0f0; }
  .desktop, button, input { font-family: 'Open Sans', 'Noto Sans', sans-serif; font-size: 23px; color: #000; }
  .desktop { display: flex; flex-direction: column; min-height: 100vh; background: #f0f0f0; overflow: hidden; }
  button { border: 0; background: none; padding: 0; margin: 0; box-sizing: border-box; }
  .defs { position: absolute; }

  .title-bar { display: flex; align-items: center; height: 46px; padding-right: 3px; background: #f6eff8; }
  .logo { width: 32px; height: 32px; margin-right: 7px; }
  h1 { flex: 1; margin: 0; font-size: 23px; font-weight: 400; line-height: 46px; white-space: nowrap; }
  .window-buttons { display: flex; }
  .window-buttons button { width: 92px; height: 46px; display: grid; place-items: center; }
  .window-buttons svg { width: 20px; height: 20px; overflow: visible; fill: none; stroke: #000; stroke-width: 2; }

  .menu-bar { display: flex; align-items: center; height: 40px; padding-left: 10px; border-bottom: 2px solid #a0a0a0; box-shadow: 0 2px #fff; }
  .doc { width: 30px; height: 30px; margin-right: 17px; }
  .menu { margin-right: 33px; line-height: 40px; }
  .mdi-buttons { display: flex; gap: 2px; margin-left: auto; padding-right: 1px; }
  .mdi-buttons button { width: 36px; height: 36px; display: grid; place-items: center; background: #fff; border: 1px solid #e2e2e2; }
  .mdi-buttons svg { width: 16px; height: 16px; fill: #7c8a99; }

  .toolbar { display: flex; align-items: center; height: 50px; margin-top: 2px; border-bottom: 2px solid #a0a0a0; }
  .first { box-shadow: 0 2px #fff; }
  .grip { width: 6px; height: 38px; margin: 0 4px; background: repeating-linear-gradient(#a0a0a0 0 2px, #f0f0f0 2px 4px); }
  .sep { width: 2px; height: 42px; margin: 0 3px 0 5px; background: #a0a0a0; }
  .sep.roomy { margin: 0 6px 0 7px; }
  .edge { width: 2px; align-self: stretch; margin-left: 4px; background: #a0a0a0; box-shadow: 2px 0 #fff; }
  .drop + .edge { margin-left: 2px; }
  .tool { width: 50px; height: 46px; margin: 0 3px; display: grid; place-items: center; }
  .ico { width: 32px; height: 34px; overflow: visible; flex: none; }
  .drop { width: 74px; height: 46px; display: flex; align-items: center; gap: 11px; padding-left: 7px; }
  .caret { border: 6px solid transparent; border-top-color: #000; border-bottom: 0; }
  .pressed { background: #f8f8f8; border: 2px solid #fff; border-top-color: #a0a0a0; border-left-color: #a0a0a0; }
  .raised { border: 2px solid #a0a0a0; border-top-color: #fff; border-left-color: #fff; }
  .labelled { display: flex; align-items: center; height: 46px; white-space: nowrap; gap: 7px; }
  .order { width: 179px; padding-left: 16px; }
  .auto { width: 187px; margin-left: 3px; padding-left: 7px; gap: 7px; }
  .frame { font-size: 18px; color: #4a4a4a; }
  .frame.raised { color: #000; }
  .glyph { font: 700 25px 'Liberation Sans', sans-serif; fill: #555; }
  .glyph.small { font-size: 22px; }
  .right-tools { display: flex; align-items: center; gap: 20px; margin-left: auto; padding-right: 10px; }
  .find svg { display: block; width: 28px; height: 28px; }
  .mail svg { display: block; width: 50px; height: 44px; }
  .badge-text { font-size: 22px; fill: #fff; }

  .chart { position: relative; padding: 0 4px 0 2px; background: #c0c0c0; border-left: 2px solid #696969; border-top: 2px solid #696969; border-bottom: 2px solid #e3e3e3; }
  .plot { display: block; width: 100%; height: auto; font: 18px 'Noto Sans', sans-serif; }
  .crisp { shape-rendering: crispEdges; }
  .divider { stroke: #000; stroke-width: 2; }
  .frame-line { fill: none; stroke: #000; stroke-width: 2; }
  .up { fill: #008000; }
  .down { fill: #ff0000; }
  .average { fill: none; stroke-linejoin: round; stroke-linecap: round; }
  .fast { stroke: #afeeee; stroke-width: 6; }
  .slow { stroke: #696969; stroke-width: 4; }
  .current-price { fill: #fff; }

  .panel { position: absolute; left: 47px; top: 45px; width: 240px; box-sizing: border-box; padding: 16px 18px 18px; display: flex; flex-direction: column; gap: 20px; background: #000; border: 2px solid #daa520; }
  .panel h2 { margin: 0 0 -16px; padding-left: 26px; font: 900 35px/58px Roboto, 'Liberation Sans', sans-serif; color: #fff; white-space: nowrap; }
  .panel button, .field label { height: 40px; box-sizing: border-box; border: 2px solid #fff; background: #daa520; font: 26px/36px 'Liberation Sans', sans-serif; color: #000; text-align: center; }
  .field { display: flex; height: 40px; padding-left: 20px; }
  .field input { position: relative; z-index: 1; width: 100px; height: 40px; box-sizing: border-box; padding: 0 8px 0 0; border: 2px solid #fff; border-radius: 0; background: #000; color: #fff; font: 26px/36px 'Liberation Sans', sans-serif; text-align: right; }
  .field label { width: 98px; margin-left: -18px; padding-right: 2px; font-size: 25px; white-space: nowrap; }

  .tabs { display: flex; align-items: stretch; height: 42px; border-bottom: 2px solid #fff; box-shadow: inset 0 2px #000; }
  .tab-list { flex: 1; display: flex; overflow: hidden; padding-left: 11px; border-left: 2px solid #808080; }
  .tab { position: relative; flex: none; width: 184px; height: 38px; margin-top: 2px; font-size: 21px; color: #6d6d6d; line-height: 38px; }
  .tab::after { content: ''; position: absolute; right: 0; top: 4px; width: 2px; height: 28px; background: #808080; }
  .tab.wide { width: 192px; }
  .tab.narrow { width: 176px; }
  .tab.active { margin-top: 0; height: 38px; line-height: 42px; background: #fff; color: #000; border: 2px solid #000; border-top: 0; }
  .tab.active::after, .tab.bare::after { display: none; }
  .scroll { width: 38px; display: grid; place-items: center; }
  .prev, .next { border: 6px solid transparent; }
  .prev { border-right-color: #a0a0a0; border-left: 0; }
  .next { border-left-color: #000; border-right: 0; }

  .status { display: flex; align-items: center; height: 44px; font-size: 22px; }
  .help { flex: 1; padding-left: 5px; }
  .cell { box-sizing: border-box; height: 36px; line-height: 36px; padding-left: 9px; border-left: 2px solid #a0a0a0; box-shadow: inset 1px 0 #fff; }
  .c232 { width: 232px; } .c204 { width: 204px; } .c142 { width: 142px; } .c136 { width: 136px; } .c130 { width: 130px; }
  .traffic { display: flex; align-items: center; gap: 7px; width: 259px; }
  .traffic svg { width: 48px; height: 26px; }

  .taskbar { display: grid; grid-template-columns: 1fr auto 1fr; align-items: center; height: 96px; box-sizing: border-box; padding-bottom: 2px; border-top: 2px solid #5c4240; background: linear-gradient(90deg, #451613 0, #451613 14%, #2e1d1e 20%, #2f1c1d 27%, #3e1715 36%, #3c1715 60%, #3a1a18 76%, #331c1f 86%, #481a14 95%, #351a1a 100%); }
  .weather { display: flex; align-items: center; gap: 19px; padding-left: 42px; text-align: left; }
  .weather svg { width: 40px; height: 48px; }
  .lines { display: flex; flex-direction: column; font-size: 23px; line-height: 32px; color: #fff; }
  .dim { color: #d0c0c0; }
  .centre { display: flex; align-items: center; }
  .app { position: relative; width: 80px; height: 80px; margin: 0 4px; display: grid; place-items: center; border-radius: 8px; }
  .app-ico { width: 48px; height: 48px; }
  .current { background: #4a2a29; border: 1px solid #573837; }
  .open::after, .current::after { content: ''; position: absolute; bottom: 2px; width: 12px; height: 6px; border-radius: 3px; background: #a89494; }
  .current::after { width: 32px; background: #4cc2ff; }
  .search { display: flex; align-items: center; width: 436px; height: 60px; box-sizing: border-box; margin: 0 5px 0 9px; padding: 0 10px 0 21px; border-radius: 30px; background: #f5f3f4; }
  .mag { width: 32px; height: 32px; margin-right: 19px; fill: none; stroke: #222; stroke-width: 3; }
  .search input { flex: 1; min-width: 0; border: 0; padding: 0; background: none; font-size: 26px; }
  .search input::placeholder { color: #5c5c5c; opacity: 1; }
  .bing { width: 40px; height: 42px; }
  .fx-big { font: 700 27px 'Liberation Sans', sans-serif; fill: #d8e4f4; }
  .fx-small { font: 700 13px 'Liberation Sans', sans-serif; fill: #fff; }

  .tray { display: flex; align-items: center; justify-content: flex-end; padding-right: 38px; }
  .tray svg { width: 34px; height: 34px; fill: none; stroke: #fff; stroke-width: 2; overflow: visible; }
  .t-chev { margin-right: 30px; }
  .t-sync, .t-cloud { margin-right: 30px; }
  .t-wifi, .t-mute { margin-right: 14px; }
  .tray .dot { fill: #ff9a10; stroke: none; }
  .clock { display: flex; flex-direction: column; width: 141px; line-height: 32px; text-align: right; color: #fff; }
  .count { width: 35px; height: 35px; margin-left: 21px; border-radius: 50%; background: #4cc2ff; font-size: 18px; line-height: 35px; }
</style>
